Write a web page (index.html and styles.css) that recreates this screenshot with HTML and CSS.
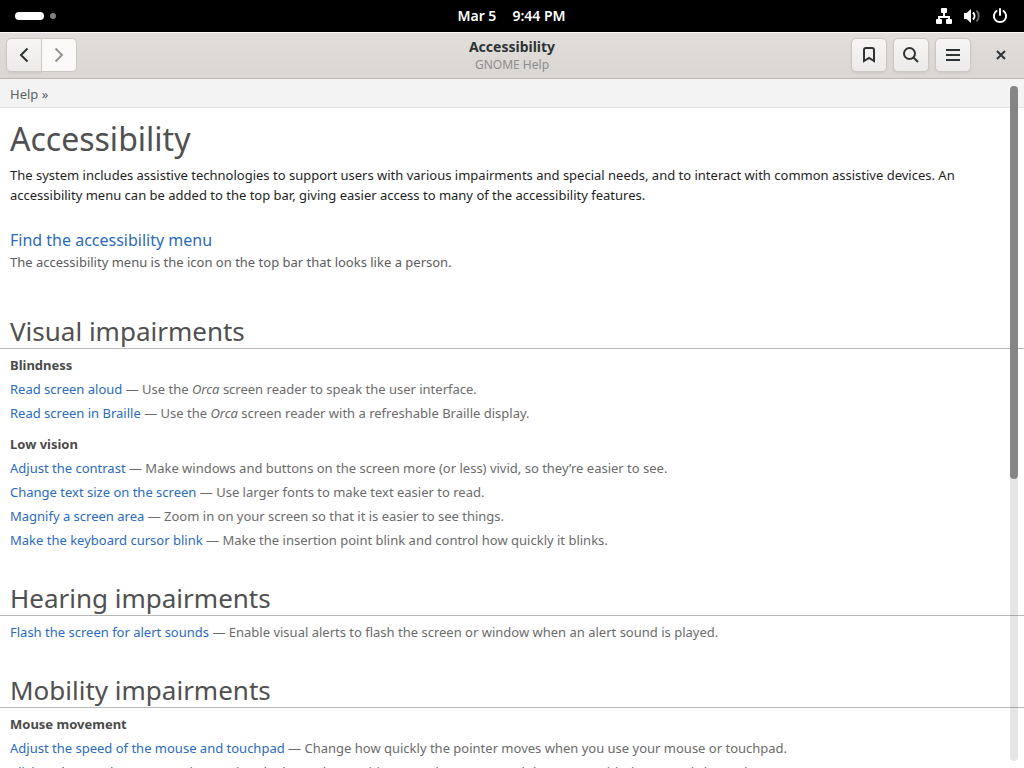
FILE: index.html
```html
<!DOCTYPE html>
<html lang="en">
<head>
<meta charset="utf-8">
<title>Accessibility</title>
<link rel="stylesheet" href="styles.css">
</head>
<body>
<div class="topbar">
  <div class="workspaces"><span class="pill"></span><span class="dot"></span></div>
  <div class="clock"><span>Mar 5</span><span>9:44 PM</span></div>
  <div class="status">
    <svg width="16" height="16" viewBox="0 0 16 16" fill="#fff"><rect x="5" y="0" width="6" height="5" rx="1"/><path d="M7 5h2v3h5v4h-2v-2H4v2H2V8h5z"/><rect x="0" y="11" width="6" height="5" rx="1"/><rect x="10" y="11" width="6" height="5" rx="1"/></svg>
    <svg width="16" height="16" viewBox="0 0 16 16" fill="none" stroke-width="2"><path fill="#fff" d="M0 5h2.500L7 1v14l-4.500-4H0z"/><path stroke="#fff" d="M9 4.500c2 2 2 5 0 7"/><path stroke="#666" d="M12.500 2.500c3 3 3 8 0 11"/></svg>
    <svg width="16" height="16" viewBox="0 0 16 16" fill="none" stroke="#fff" stroke-width="2" stroke-linecap="round"><path d="M4.500 3a6.100 6.100 0 1 0 7 0M8 1v6"/></svg>
  </div>
</div>
<header class="headerbar">
  <div class="nav">
    <button class="btn back" aria-label="Back"><svg width="16" height="16" viewBox="0 0 16 16"><path d="M11.500 1.500L5 8l6.500 6.500"/></svg></button>
    <button class="btn forward" aria-label="Forward" disabled><svg width="16" height="16" viewBox="0 0 16 16"><path d="M4.500 1.500L11 8l-6.500 6.500"/></svg></button>
  </div>
  <div class="titles"><div class="title">Accessibility</div><div class="subtitle">GNOME Help</div></div>
  <div class="tools">
    <button class="btn" aria-label="Bookmarks"><svg width="16" height="16" viewBox="0 0 16 16"><path d="M3 14V3q0-2 2-2h6q2 0 2 2v11l-5-3z"/></svg></button>
    <button class="btn" aria-label="Search"><svg width="16" height="16" viewBox="0 0 16 16"><circle cx="6.500" cy="6.500" r="5.500"/><path d="M10.500 10.500l4.500 4.500"/></svg></button>
    <button class="btn" aria-label="Menu"><svg width="16" height="16" viewBox="0 0 16 16"><path d="M1 3h14M1 8h14M1 13h14"/></svg></button>
    <button class="close" aria-label="Close"><svg width="16" height="16" viewBox="0 0 16 16"><path d="M4 4l8 8M12 4l-8 8"/></svg></button>
  </div>
</header>
<div class="view">
<nav class="crumbs"><a href="#help">Help</a> »</nav>
<main class="page">
  <h1>Accessibility</h1>
  <p class="intro">The system includes assistive technologies to support users with various impairments and special needs, and to interact with common assistive devices. An accessibility menu can be added to the top bar, giving easier access to many of the accessibility features.</p>
  <div class="feature"><a href="#menu">Find the accessibility menu</a><p>The accessibility menu is the icon on the top bar that looks like a person.</p></div>
  <section>
    <h2>Visual impairments</h2>
    <h3>Blindness</h3>
    <ul>
      <li><a href="#orca">Read screen aloud</a> — Use the <em>Orca</em> screen reader to speak the user interface.</li>
      <li><a href="#braille">Read screen in Braille</a> — Use the <em>Orca</em> screen reader with a refreshable Braille display.</li>
    </ul>
    <h3>Low vision</h3>
    <ul>
      <li><a href="#contrast">Adjust the contrast</a> — Make windows and buttons on the screen more (or less) vivid, so they’re easier to see.</li>
      <li><a href="#text">Change text size on the screen</a> — Use larger fonts to make text easier to read.</li>
      <li><a href="#magnify">Magnify a screen area</a> — Zoom in on your screen so that it is easier to see things.</li>
      <li><a href="#blink">Make the keyboard cursor blink</a> — Make the insertion point blink and control how quickly it blinks.</li>
    </ul>
  </section>
  <section>
    <h2>Hearing impairments</h2>
    <ul>
      <li><a href="#flash">Flash the screen for alert sounds</a> — Enable visual alerts to flash the screen or window when an alert sound is played.</li>
    </ul>
  </section>
  <section>
    <h2>Mobility impairments</h2>
    <h3>Mouse movement</h3>
    <ul>
      <li><a href="#speed">Adjust the speed of the mouse and touchpad</a> — Change how quickly the pointer moves when you use your mouse or touchpad.</li>
      <li><a href="#keypad">Click and move the mouse pointer using the keypad</a> — Enable mouse keys to control the mouse with the numeric keypad.</li>
    </ul>
  </section>
</main>
<div class="scrollbar"><div class="thumb"></div></div>
</div>
</body>
</html>
```

FILE: styles.css
```css
* { box-sizing: border-box; }
body {
  margin: 0;
  height: 100vh;
  display: flex;
  flex-direction: column;
  overflow: hidden;
  background: #fff;
  font: 13px/20px "Noto Sans", sans-serif;
  color: #1e1e1e;
}
h1, h2, h3, p, ul { margin: 0; padding: 0; font-weight: 400; }
a { color: #2a6bbd; text-decoration: none; }
svg { display: block; }
.topbar, .headerbar {
  display: grid;
  grid-template-columns: 1fr auto 1fr;
  align-items: center;
  flex: none;
}
.topbar { height: 32px; padding: 0 16px 0 15px; background: #000; color: #fff; }
.workspaces { display: flex; align-items: center; gap: 6px; }
.pill { width: 29px; height: 8px; border-radius: 4px; background: #fff; }
.dot { width: 6px; height: 6px; border-radius: 50%; background: #808080; }
.clock { display: flex; gap: 16px; font-size: 14px; font-weight: 600; }
.status { display: flex; justify-content: flex-end; gap: 12px; }
.headerbar {
  height: 47px;
  padding: 0 6px 1px;
  background: linear-gradient(#e1dedb, #dad6d2);
  border-top: 1px solid #f9f8f8;
  border-bottom: 1px solid #bfb8b1;
}
.nav { display: flex; }
.btn {
  width: 36px;
  height: 34px;
  padding: 0;
  display: grid;
  place-items: center;
  border: 1px solid #cdc7c2;
  border-radius: 5px;
  background: linear-gradient(#f6f5f4, #edebe9);
  box-shadow: 0 1px 2px rgba(0, 0, 0, 0.08);
}
.btn svg, .close svg { fill: none; stroke: #2e3436; stroke-width: 2; }
.back { border-radius: 5px 0 0 5px; }
.forward { border-radius: 0 5px 5px 0; border-left: 0; width: 35px; background: #faf9f8; box-shadow: none; }
.forward svg { stroke: #929595; }
.titles { padding-top: 2px; text-align: center; color: #2e3436; }
.title { font-size: 14px; font-weight: 700; line-height: 18px; }
.subtitle { font-size: 12px; line-height: 18px; color: #8b8d8d; }
.tools { display: flex; justify-content: flex-end; align-items: center; gap: 6px; }
.close { width: 34px; height: 34px; margin-left: 7px; padding: 0; border: 0; background: none; display: grid; place-items: center; }
.view { position: relative; flex: 1; min-height: 0; overflow: hidden; }
.crumbs { height: 29px; padding: 5px 10px; background: #f3f3f3; border-bottom: 1px solid #e4e4e4; color: #5e5e5e; }
.crumbs a { color: #5e5e5e; }
.page { padding-top: 7px; }
h1, h2 { padding: 0 10px; color: #505050; }
h1 { font-size: 32px; line-height: 48px; }
.intro { padding: 2px 20px 0 10px; }
.feature { padding: 23px 10px 39px; color: #5c5c5c; }
.feature a { font-size: 16px; line-height: 24px; }
h2 { margin-bottom: 4px; padding-top: 3px; font-size: 26px; line-height: 34px; border-bottom: 1px solid #b8b8b8; }
h3 { padding: 2px 10px; font-size: 13px; line-height: 20px; font-weight: 700; color: #4a4a4a; }
ul { list-style: none; padding: 0 10px; color: #6b6b6b; }
li { line-height: 24px; white-space: nowrap; }
ul + h3 { margin-top: 7px; }
section + section { margin-top: 26px; }
.scrollbar { position: absolute; top: 7px; right: 6px; bottom: 7px; width: 8px; border-radius: 4px; background: rgba(0, 0, 0, 0.1); }
.thumb { height: 58.2%; border-radius: 4px; background: #858585; }
```
